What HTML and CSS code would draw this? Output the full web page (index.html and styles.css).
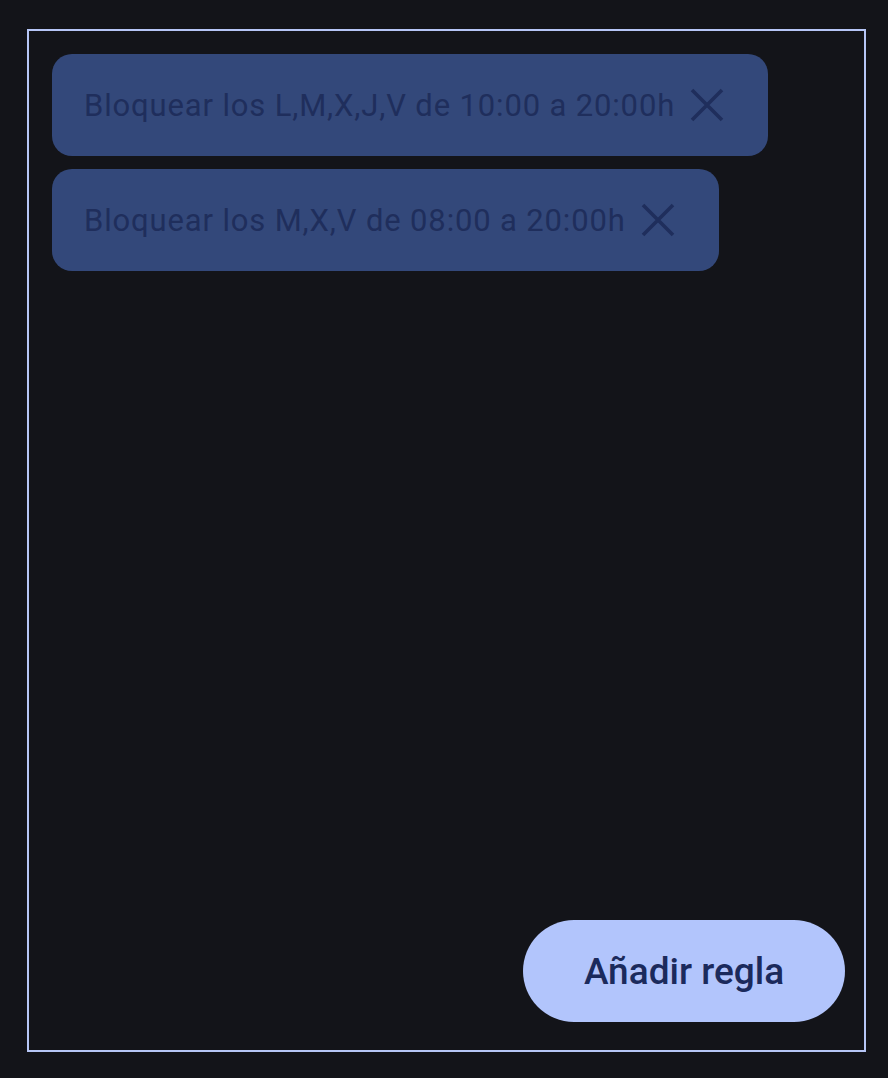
FILE: index.html
```html
<!DOCTYPE html>
<html lang="es">
<head>
<meta charset="utf-8">
<link rel="stylesheet" href="styles.css">
</head>
<body>
<div class="frame">
  <div class="chips">
    <div class="chip">
      <span class="chip-label">Bloquear los L,M,X,J,V de 10:00 a 20:00h</span>
      <svg class="chip-close" viewBox="0 0 34 34" aria-hidden="true"><path d="M2 2 L32 32 M32 2 L2 32" /></svg>
    </div>
    <div class="chip">
      <span class="chip-label">Bloquear los M,X,V de 08:00 a 20:00h</span>
      <svg class="chip-close" viewBox="0 0 34 34" aria-hidden="true"><path d="M2 2 L32 32 M32 2 L2 32" /></svg>
    </div>
  </div>
  <div class="actions">
    <button class="add-btn">Añadir regla</button>
  </div>
</div>
</body>
</html>
```
FILE: styles.css
```css
html, body {
  margin: 0;
  padding: 0;
  background: #131419;
  height: 100%;
}
body {
  font-family: Roboto, "Noto Sans", sans-serif;
  padding: 29px 23px 26px 27px;
  box-sizing: border-box;
  height: 1078px;
}
.frame {
  box-sizing: border-box;
  height: 1023px;
  width: 839px;
  border: 2px solid #b6c6f6;
  padding: 23px 19px 28px 23px;
  display: flex;
  flex-direction: column;
  justify-content: space-between;
}
.chips {
  display: flex;
  flex-direction: column;
  align-items: flex-start;
  gap: 13px;
}
.chip {
  display: flex;
  align-items: center;
  height: 102px;
  box-sizing: border-box;
  padding: 0 44px 0 32px;
  background: #33487a;
  border-radius: 20px;
  gap: 15px;
}
.chip-label {
  font-size: 31px;
  letter-spacing: 0.85px;
  color: #1f2e5c;
}
.chip-close {
  width: 34px;
  height: 34px;
  fill: none;
  stroke: #1f2e5c;
  stroke-width: 3.6;
}
.actions {
  display: flex;
  justify-content: flex-end;
}
.add-btn {
  height: 102px;
  width: 322px;
  border: none;
  border-radius: 51px;
  background: #b2c5fc;
  color: #1b2a5c;
  font-family: Roboto, "Noto Sans", sans-serif;
  font-weight: 500;
  font-size: 37px;
  padding: 0;
}
```
